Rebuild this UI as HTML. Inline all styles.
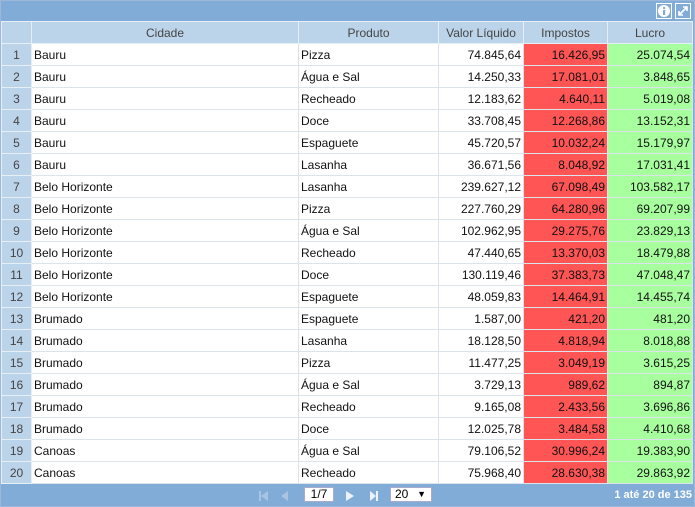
<!DOCTYPE html><html><head><style>
body{margin:0;width:695px;height:507px;overflow:hidden;background:#fff;font-family:"Liberation Sans",sans-serif;font-size:12px;color:#111}
.wrap{position:absolute;left:0;top:0;width:693px;height:505px;border:1px solid #9bb8d8;background:#82acd8}
.top{height:21px;position:relative}
.ic{position:absolute;top:2px;width:16px;height:16px;border:1px solid #fff;box-sizing:border-box;background:#82acd8}
table{position:absolute;top:20px;left:0;border-collapse:collapse;table-layout:fixed;background:#fff}
td,th{height:21px;padding:0 2px;border:1px solid #dde3ea;white-space:nowrap;overflow:hidden}
th{background:#bcd4ea;font-weight:normal;color:#444;border-color:#e6eef6}
td.n{background:#bcd4ea;color:#444;text-align:center;border-color:#e6eef6}
td.r{text-align:right}
td.red{background:#ff5555;text-align:right}
td.g{background:#a8ff9e;text-align:right}
.foot{position:absolute;top:484px;left:0;width:693px;height:21px;color:#fff}
.box{position:absolute;top:2px;height:15px;background:#fff;color:#000;border:1px solid #aac;box-sizing:border-box;font-size:12px;line-height:13px}
</style></head><body><div class="wrap">
<div class="top">
<div class="ic" style="left:655px"><svg width="14" height="14"><circle cx="7" cy="7" r="6" fill="#fff"/><rect x="6" y="6" width="2.2" height="5" fill="#82acd8"/><circle cx="7.1" cy="4" r="1.2" fill="#82acd8"/></svg></div>
<div class="ic" style="left:674px"><svg width="14" height="14"><path d="M3 11L11 3M7 3h4v4M3 7v4h4" stroke="#fff" stroke-width="1.6" fill="none"/></svg></div>
</div>
<table>
<colgroup><col style="width:30px"><col style="width:267px"><col style="width:140px"><col style="width:85px"><col style="width:84px"><col style="width:85px"></colgroup>
<tr><th></th><th>Cidade</th><th>Produto</th><th>Valor Líquido</th><th>Impostos</th><th>Lucro</th></tr>
<tr><td class="n">1</td><td>Bauru</td><td>Pizza</td><td class="r">74.845,64</td><td class="red">16.426,95</td><td class="g">25.074,54</td></tr>
<tr><td class="n">2</td><td>Bauru</td><td>Água e Sal</td><td class="r">14.250,33</td><td class="red">17.081,01</td><td class="g">3.848,65</td></tr>
<tr><td class="n">3</td><td>Bauru</td><td>Recheado</td><td class="r">12.183,62</td><td class="red">4.640,11</td><td class="g">5.019,08</td></tr>
<tr><td class="n">4</td><td>Bauru</td><td>Doce</td><td class="r">33.708,45</td><td class="red">12.268,86</td><td class="g">13.152,31</td></tr>
<tr><td class="n">5</td><td>Bauru</td><td>Espaguete</td><td class="r">45.720,57</td><td class="red">10.032,24</td><td class="g">15.179,97</td></tr>
<tr><td class="n">6</td><td>Bauru</td><td>Lasanha</td><td class="r">36.671,56</td><td class="red">8.048,92</td><td class="g">17.031,41</td></tr>
<tr><td class="n">7</td><td>Belo Horizonte</td><td>Lasanha</td><td class="r">239.627,12</td><td class="red">67.098,49</td><td class="g">103.582,17</td></tr>
<tr><td class="n">8</td><td>Belo Horizonte</td><td>Pizza</td><td class="r">227.760,29</td><td class="red">64.280,96</td><td class="g">69.207,99</td></tr>
<tr><td class="n">9</td><td>Belo Horizonte</td><td>Água e Sal</td><td class="r">102.962,95</td><td class="red">29.275,76</td><td class="g">23.829,13</td></tr>
<tr><td class="n">10</td><td>Belo Horizonte</td><td>Recheado</td><td class="r">47.440,65</td><td class="red">13.370,03</td><td class="g">18.479,88</td></tr>
<tr><td class="n">11</td><td>Belo Horizonte</td><td>Doce</td><td class="r">130.119,46</td><td class="red">37.383,73</td><td class="g">47.048,47</td></tr>
<tr><td class="n">12</td><td>Belo Horizonte</td><td>Espaguete</td><td class="r">48.059,83</td><td class="red">14.464,91</td><td class="g">14.455,74</td></tr>
<tr><td class="n">13</td><td>Brumado</td><td>Espaguete</td><td class="r">1.587,00</td><td class="red">421,20</td><td class="g">481,20</td></tr>
<tr><td class="n">14</td><td>Brumado</td><td>Lasanha</td><td class="r">18.128,50</td><td class="red">4.818,94</td><td class="g">8.018,88</td></tr>
<tr><td class="n">15</td><td>Brumado</td><td>Pizza</td><td class="r">11.477,25</td><td class="red">3.049,19</td><td class="g">3.615,25</td></tr>
<tr><td class="n">16</td><td>Brumado</td><td>Água e Sal</td><td class="r">3.729,13</td><td class="red">989,62</td><td class="g">894,87</td></tr>
<tr><td class="n">17</td><td>Brumado</td><td>Recheado</td><td class="r">9.165,08</td><td class="red">2.433,56</td><td class="g">3.696,86</td></tr>
<tr><td class="n">18</td><td>Brumado</td><td>Doce</td><td class="r">12.025,78</td><td class="red">3.484,58</td><td class="g">4.410,68</td></tr>
<tr><td class="n">19</td><td>Canoas</td><td>Água e Sal</td><td class="r">79.106,52</td><td class="red">30.996,24</td><td class="g">19.383,90</td></tr>
<tr><td class="n">20</td><td>Canoas</td><td>Recheado</td><td class="r">75.968,40</td><td class="red">28.630,38</td><td class="g">29.863,92</td></tr>
</table>
<div class="foot">
<svg style="position:absolute;left:258px;top:6px" width="100" height="10" fill="#a8c4e2"><path d="M0 0h2v10H0zM2 5l7-5v10z"/><path d="M22 5l7-5v10z"/></svg>
<div class="box" style="left:303px;width:30px;text-align:center">1/7</div>
<svg style="position:absolute;left:345px;top:6px" width="40" height="10" fill="#fff" opacity=".85"><path d="M0 0l8 5-8 5z"/><path d="M24 0l6 5-6 5zM30 0h2v10h-2z"/></svg>
<div class="box" style="left:389px;width:42px;padding-left:4px">20<span style="position:absolute;right:5px;font-size:9px">▼</span></div>
<div style="position:absolute;right:2px;top:4px;font-weight:bold;font-size:11px">1 até 20 de 135</div>
</div>
</div></body></html>
